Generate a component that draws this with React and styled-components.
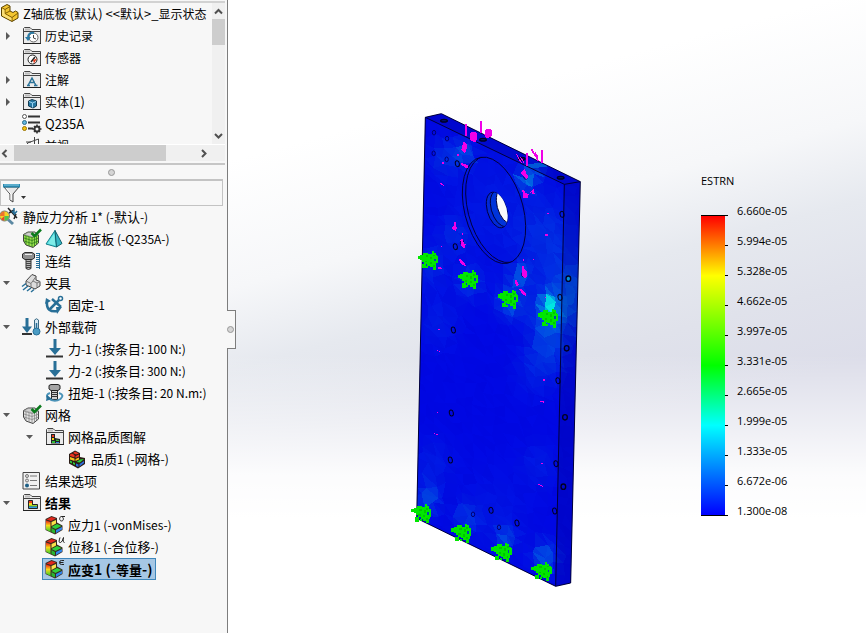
import React, { useState } from "react";
import styled, { createGlobalStyle } from "styled-components";

const Global = createGlobalStyle`
  * { box-sizing: border-box; }
  body { margin: 0; background: #fff; }
  button { font: inherit; color: inherit; background: none; border: 0; padding: 0; margin: 0; }
  ul { list-style: none; margin: 0; padding: 0; }
`;

const Layout = styled.div`
  display: flex;
  min-height: 100vh;
  color: #000;
  font-family: "Noto Sans CJK SC", "Open Sans", sans-serif;
  font-size: 13px;
`;

const Sidebar = styled.aside`
  flex: none;
  display: flex;
  flex-direction: column;
  width: 228px;
  background: #f7f7f7;
  border-right: 1px solid #7d7d7d;
`;

const FeaturePane = styled.section`
  display: grid;
  grid-template-columns: minmax(0, 1fr) 13px;
  grid-template-rows: 141px 17px;
  margin: 1px 2px 0 0;
  border-top: 2px solid #d2d2d2;
  font-size: 12px;
`;

const Clip = styled.div`
  overflow: hidden;
`;

const VScroll = styled.div`
  display: flex;
  flex-direction: column;
  background: #f0f0f0;
`;

const HScroll = styled.div`
  grid-column: 1 / -1;
  display: flex;
  align-items: stretch;
  background: #f0f0f0;
  border-top: 1px solid #fff;
`;

const ScrollButton = styled.button`
  flex: none;
  display: flex;
  align-items: center;
  justify-content: ${(p) => p.$align || "center"};
  width: ${(p) => p.$w}px;
  height: ${(p) => p.$h}px;
`;

const Track = styled.div`
  flex: 1;
  display: flex;
  flex-direction: ${(p) => (p.$vertical ? "column" : "row")};
`;

const Thumb = styled.div`
  flex: 0 0 ${(p) => p.$size};
  background: #cdcdcd;
`;

const Splitter = styled.div`
  display: flex;
  align-items: center;
  justify-content: center;
  height: 16px;
  margin: 2px 2px 0 0;
  padding-right: 3px;
  border-top: 2px solid #c6c6c6;
`;

const Grip = styled.span`
  display: block;
  width: 7px;
  height: 7px;
  border: 1px solid #979797;
  border-radius: 50%;
  background: #d5d5d5;
`;

const FilterBox = styled.label`
  display: flex;
  align-items: center;
  height: 27px;
  margin-right: 4px;
  padding-left: 2px;
  border: 1px solid #c3c3c3;
  border-top-width: 2px;
`;

const FilterInput = styled.input`
  flex: 1;
  min-width: 0;
  border: 0;
  outline: 0;
  background: transparent;
  font: inherit;
`;

const Row = styled.li`
  display: flex;
  align-items: center;
  height: 22px;
  padding-left: ${(p) => p.$level * 23}px;
  white-space: nowrap;
`;

const Toggle = styled.button`
  flex: none;
  display: flex;
  align-items: center;
  width: 22px;
  height: 22px;
  padding-left: 3px;
`;

const Item = styled.button`
  display: flex;
  align-items: center;
  gap: 3px;
  height: 22px;
  line-height: 20px;
  border: 1px solid transparent;
  border-width: 1px 3px 1px 0;
  text-align: left;
  font-weight: ${(p) => (p.$bold ? 700 : 400)};
  ${(p) =>
    p.$selected &&
    `
    margin-left: -3px;
    padding: 0 3px 0 2px;
    border: 1px solid #3f87bb;
    background: #a6c7e5;
  `}
`;

const Latin = styled.span`
  font-size: ${(p) => p.$size}px;
`;

const IconBox = styled.svg`
  flex: none;
  display: block;
  width: 20px;
  height: 20px;
  overflow: visible;
`;

const Glyph = styled.svg`
  flex: none;
  display: block;
`;

const Viewport = styled.main`
  position: relative;
  flex: 1;
  min-width: 0;
  display: grid;
  grid-template-columns: minmax(0, 177fr) 190px minmax(0, 106fr) 90px minmax(0, 75fr);
  background:
    linear-gradient(180deg, rgba(255, 255, 255, 0) 56%, rgba(255, 255, 255, 0.5) 67%, rgba(255, 255, 255, 0.9) 75%, #fff 82%),
    linear-gradient(165deg, #fff 20%, #f6f7f9 36%, #e6e9ef 46%, #e0e2eb 56%, #dcdde9 66%);
`;

const PaneHandle = styled.button`
  position: absolute;
  left: -1px;
  top: 49%;
  display: flex;
  align-items: center;
  width: 9px;
  height: 39px;
  border: 1px solid #7d7d7d;
  border-left: 0;
  background: #f7f7f7;
`;

const ModelSvg = styled.svg`
  grid-column: 2;
  display: block;
  width: 190px;
  height: 490px;
  margin-top: 105px;
`;

const Legend = styled.section`
  grid-column: 4;
  margin-top: 166px;
  font-family: "Open Sans", sans-serif;
  font-size: 11px;
`;

const LegendTitle = styled.div`
  height: 30px;
  line-height: 30px;
`;

const LegendBody = styled.div`
  display: flex;
  gap: 9px;
`;

const Scale = styled.div`
  display: flex;
  height: 301px;
  margin-top: 19px;
  border-top: 1px solid #000;
  border-bottom: 1px solid #000;
`;

const Ramp = styled.div`
  width: 24px;
  background: linear-gradient(180deg, #f00 0%, #ff0 20%, #0f0 50%, #0ff 70%, #00f 100%);
`;

const Ticks = styled.div`
  width: 3px;
  background: repeating-linear-gradient(180deg, transparent 0 29px, #000 29px 30px);
`;

const Labels = styled.ul`
  line-height: 30px;
`;

/* ---------- small glyphs ---------- */

const Chevron = ({ d }) => (
  <Glyph width="9" height="9" viewBox="0 0 9 9" aria-hidden="true">
    <path d={d} fill="none" stroke="#505050" strokeWidth="2" />
  </Glyph>
);

const Arrow = ({ open }) => (
  <Glyph width="8" height="8" viewBox="0 0 8 8" aria-hidden="true">
    <path d={open ? "M0 2H7L3.5 6Z" : "M3 0V8L7 4Z"} fill="#5a5a5a" />
  </Glyph>
);

/* ---------- tree icons, drawn on a 20 by 20 grid ---------- */

const Folder = ({ children }) => (
  <>
    <path d="M1.5 17.5V2.5L2.5 1.5H8L10 3.5H18.5V17.5Z" fill="#ebebeb" stroke="#444" />
    <path d="M2 5.500H18" stroke="#444" />
    <path d="M3 3.500H8" stroke="#bbb" strokeWidth="2" />
    <path d="M1 17.500H19" stroke="#222" />
    {children}
  </>
);

const MARKS = {
  sigma: "M20 1.5H16.5C14 1.5 14 6 16.5 6C19 6 19 2 16.5 1.5",
  u: "M15 .5Q13 6 15.500 5.500Q17.500 5 18.500 .5Q17.500 5.500 19.500 5.500",
  eps: "M19 1.500H16.500Q14.500 1.500 14.500 3.500Q14.500 5.500 16.500 5.500H19M15 3.500H18.500",
};

const Stress = ({ mark }) => (
  <>
    <defs>
      <linearGradient id="ramp" gradientUnits="userSpaceOnUse" x1="0" y1="3" x2="0" y2="18">
        <stop offset=".2" stopColor="#ee2b1a" />
        <stop offset=".5" stopColor="#f7d718" />
        <stop offset=".85" stopColor="#4cd02c" />
      </linearGradient>
    </defs>
    <path d="M.5 4L6.500 1L12 3V7.500L17.500 10.500V15L10 19.500L.5 15Z" fill="#3a2a20" />
    <path d="M1.500 4.500L6.500 2L11 3.500L6 6Z" fill="#e3261b" />
    <path d="M1 5.500L5.500 7V17L1 14.500Z" fill="url(#ramp)" />
    <path d="M6.500 7L11 5V8.500L6.500 11Z" fill="#f9e24a" />
    <path d="M6.500 12L12 9L16.500 11L10.500 14Z" fill="#2fd03a" />
    <path d="M6.500 13L10 15V18.500L6.500 17Z" fill="#29b52f" />
    <path d="M11 15L17 12V14.500L11 18Z" fill="#2f86ec" />
    <path d={MARKS[mark]} fill="none" stroke="#222" />
  </>
);

const MeshBlock = ({ green }) => (
  <>
    <path d="M1.5 5.500L6 3H13L16.500 6V14L11 18.500L4 16L1.500 12Z" fill={green ? "#9be24e" : "#e4e4e4"} stroke="#444" />
    <path
      d="M1.500 6L10 8.500L16.500 6M10 8.500V18M5 4L12 8M4 7V15.500M7 8V17M12.500 8V17M14.500 7V15M2 9L10 11.500L16.500 9M2 12L10 14.500L16.500 12"
      fill="none"
      stroke={green ? "#2f7b1c" : "#888"}
      strokeWidth="0.8"
    />
    <path d="M2 5.500L6 3.500H13L16 6L10 8Z" fill="#cfcfcf" stroke="#777" strokeWidth=".5" />
    <path d="M9.500 4L12.500 7L19 .5" fill="none" stroke="#0b7a1c" strokeWidth="2.500" />
  </>
);

const DownArrow = ({ x = 10 }) => (
  <>
    <path d={`M${x} 0V10`} stroke="#286f97" strokeWidth="3" />
    <path d={`M${x - 6} 9H${x + 6}L${x} 16Z`} fill="#286f97" />
  </>
);

const Bolt = () => (
  <>
    <path d="M.5 3L3 1.500H10L12.500 3V7L10 8.500H3L.5 7Z" fill="#8f8f8f" stroke="#2e2e2e" />
    <path d="M3 3.500H10" stroke="#eee" />
    <path d="M4 8.500H9V17.500L6.500 18.500L4 17.500Z" fill="#b7b7b7" stroke="#2e2e2e" />
    <path d="M4 10.500H9M4 12.500H9M4 14.500H9M4 16.500H9" stroke="#444" />
  </>
);

const ICONS = {
  part: (
    <>
      <path d="M1.500 3.500L7 .5L10 2V7L13 8.500L15.500 7L18 8.500V14L12 17.500L1.500 12Z" fill="#f3c531" stroke="#5b4300" />
      <path d="M1.500 3.500L5 5.500V9.500L12 13.500V17M12 13.500L18 9M5 5.500L10 2.500M5 9.500L10 7" fill="none" stroke="#7d5d04" />
      <path d="M2 4.500L4.500 6V10L11.500 14V16.500L2 11.500Z" fill="#f9de78" />
    </>
  ),
  history: (
    <Folder>
      <circle cx="11.500" cy="11.500" r="4.500" fill="#fff" stroke="#666" />
      <path d="M11.500 9V12L14 13" fill="none" stroke="#444" />
      <path d="M12 7Q6 6 6 12" fill="none" stroke="#2b7ba5" strokeWidth="2" />
      <path d="M3 11H9L6 15Z" fill="#2b7ba5" />
    </Folder>
  ),
  sensor: (
    <Folder>
      <circle cx="10.500" cy="11.500" r="4.500" fill="#fff" stroke="#222" />
      <path d="M9 14L13 9" stroke="#222" strokeWidth="1.500" />
      <path d="M11 12L15 10.500L12 15.500Z" fill="#e23b1a" />
    </Folder>
  ),
  note: (
    <Folder>
      <path d="M6 15.500L10 8L14 15.500M7.500 12.500H13M5 15.500H8M12 15.500H15.500" fill="none" stroke="#2b7298" strokeWidth="1.500" />
    </Folder>
  ),
  solid: (
    <Folder>
      <path d="M6.500 9L10 7.500L14.500 9V14L11 16L6.500 14Z" fill="#2678a3" stroke="#133c54" />
      <path d="M7 9.500L10.500 11V15.500M10.500 11L14 9.500" fill="none" stroke="#9cd3ef" />
    </Folder>
  ),
  material: (
    <>
      <path d="M6 2.500H18M6 8.500H18M6 14.500H11" stroke="#333" strokeWidth="2" />
      <circle cx="2.500" cy="2.500" r="2" fill="#fff" stroke="#555" />
      <circle cx="2.500" cy="8.500" r="2" fill="#62b6dd" stroke="#2b6c8c" />
      <circle cx="2.500" cy="14.500" r="2" fill="#f4c20d" stroke="#9a7400" />
      <circle cx="15" cy="15" r="2.500" fill="#f7f7f7" stroke="#333" strokeWidth="2" />
      <path d="M15 10.500V13M15 17V19.500M10.500 15H13M17 15H19.500M12 12L13 13M17 17L18 18M18 12L17 13M12 18L13 17" stroke="#333" strokeWidth="1.500" />
    </>
  ),
  plane: <path d="M5.500 17V7L16.500 3V15M4 6H9M12.500 1V16" fill="none" stroke="#444" />,
  study: (
    <>
      <circle cx="4.500" cy="9" r="5" fill="#f5d327" stroke="#777" />
      <path d="M0 9A4.500 4.500 0 0 1 4.500 4.500L4.500 9Z" fill="#f0722c" />
      <path d="M4.500 9L1 12A4.500 4.500 0 0 0 4.500 13.500Z" fill="#e8452c" />
      <path d="M4.500 13.500A4.500 4.500 0 0 0 9 9L4.500 9Z" fill="#4fc552" />
      <path d="M8 12.500L13 17" stroke="#5c89a3" strokeWidth="3" />
      <path d="M8 1L17 11M9 6L14 3M14 12L16 7" fill="none" stroke="#222" strokeWidth="1.500" />
      <path d="M14 1V6M12 4L14.500 7L17 4" fill="none" stroke="#286f97" strokeWidth="1.500" />
    </>
  ),
  meshPart: <MeshBlock green />,
  mesh: <MeshBlock />,
  tetra: (
    <>
      <path d="M1 15L10 1.500L11.500 18Z" fill="#53dfe2" stroke="#167f8a" />
      <path d="M10 1.500L17 14.500L11.500 18Z" fill="#35b6c4" stroke="#10606b" />
      <path d="M3 14.500L9 5L10.500 16.500Z" fill="#91f1ea" opacity=".7" />
    </>
  ),
  connect: (
    <>
      <Bolt />
      <path d="M14 2.500H18M14 4.500H18M14 6.500H18M14 8.500H18M14 10.500H18M14 12.500H18M14 14.500H18M14 16.500H18" stroke="#286f97" fill="none" />
      <path d="M17.500 2V18" stroke="#286f97" />
    </>
  ),
  fixture: (
    <>
      <path d="M4 8L10 1.500L14 3V7L18 8.500V13L13 16L4 12Z" fill="#dcdcdc" stroke="#444" />
      <path d="M4 8L9 10.500L14 3.500M9 10.500V14M11 8L15 10L18 8.500M15 10V14.500" fill="none" stroke="#777" />
      <path d="M0 13.500L4 10.500M1 17L6 13M5 18L9 15M9 19L12 16.500" stroke="#286f97" strokeWidth="1.500" />
    </>
  ),
  anchor: (
    <>
      <circle cx="15.500" cy="3.500" r="2" fill="#fff" stroke="#286f97" strokeWidth="1.500" />
      <path d="M14 5L4 15M7 4L16 12" fill="none" stroke="#286f97" strokeWidth="2.500" />
      <path d="M2 7Q1 18 13 16" fill="none" stroke="#286f97" strokeWidth="2.500" />
      <path d="M0 9L1 3L6 6ZM11 12H17L12 19Z" fill="#286f97" />
    </>
  ),
  loads: (
    <>
      <path d="M5 1V11" stroke="#286f97" strokeWidth="3" />
      <path d="M0 9.500H10L5 16Z" fill="#286f97" />
      <path d="M0 17H10" stroke="#333" strokeWidth="2" />
      <path d="M12.500 3Q14.500 .5 16.500 3V12H12.500Z" fill="#d6e8f2" stroke="#3a6a84" />
      <path d="M14.500 6V14" stroke="#286f97" strokeWidth="1.500" />
      <circle cx="14.500" cy="14.500" r="3.500" fill="#4b9cc4" stroke="#286f97" />
    </>
  ),
  force: (
    <>
      <DownArrow />
      <path d="M1 17.500H18" stroke="#333" strokeWidth="2" />
    </>
  ),
  torque: (
    <>
      <path d="M4 2.500L6 1.500H13L15 2.500V6L13 7.500H6L4 6Z" fill="#a5a5a5" stroke="#222" />
      <path d="M6.500 7.500H12.500V16.500H6.500Z" fill="#d0d0d0" stroke="#222" />
      <path d="M6 9.500H13M6 11.500H13M6 13.500H13" stroke="#333" />
      <path d="M5 10Q0 12 3 15Q9 20 15.500 16Q20 12 14 10" fill="none" stroke="#4b93b8" strokeWidth="2" />
      <path d="M1 18L2 12L7 16Z" fill="#286f97" />
    </>
  ),
  meshFolder: (
    <Folder>
      <path d="M6 7H10V11L15 12V16.500H6Z" fill="#222" />
      <path d="M7 8H9V10H7Z" fill="#f03b1e" />
      <path d="M7 11H9V13H7Z" fill="#f6d21b" />
      <path d="M7 14H10V16H7ZM11 12.500L14 13V14H11Z" fill="#30bb37" />
      <path d="M11 15H14V16H11Z" fill="#2b86e0" />
    </Folder>
  ),
  quality: (
    <>
      <path d="M1 5L7 1.500L12 4V8L17 9V15L10 19.500L1 14.500Z" fill="#2a1c16" />
      <path d="M2 5.500L4 4.500L6.500 6V8.500L2 7ZM5 4L7 2.500L11 4.500L8 5.500ZM7.500 7L11 5.500V7.500L7.500 9Z" fill="#ee3420" />
      <path d="M2 8L6.500 9.500V12L2 10.500ZM7.500 10L11 8.500V10.500L7.500 12Z" fill="#f7c320" />
      <path d="M2 11.500L4 12.500V14.500L2 13.500ZM8.500 13L12 10.500L16 10L12 13.500ZM5 13L7 14V16L5 15Z" fill="#2fd03a" />
      <path d="M8 14.500L10.500 15.500V18L8 17ZM11.500 15L16 12V14L11.500 17.500Z" fill="#2d6fe0" />
    </>
  ),
  options: (
    <>
      <path d="M1 1.500H17.500V18H1Z" fill="#f1f1f1" stroke="#444" />
      <path d="M8 5H15M8 9.500H15M8 14.500H15" stroke="#777" />
      <circle cx="5" cy="5" r="1.500" fill="#ddd" stroke="#777" />
      <circle cx="5" cy="9.500" r="1.500" fill="#ddd" stroke="#777" />
      <circle cx="5" cy="14.500" r="2" fill="#1d5f86" />
    </>
  ),
  results: (
    <Folder>
      <path d="M6.500 7.500H10.500V11.500H15.500V15.500H6.500Z" fill="#222" stroke="#222" />
      <path d="M7 8H10V10H7Z" fill="#f03b1e" />
      <path d="M7 10H10V12H7Z" fill="#f6d21b" />
      <path d="M7 12H15V13.500H7Z" fill="#9bd327" />
      <path d="M7 13.500H15V15H7Z" fill="#2a9fe0" />
    </Folder>
  ),
  stress: <Stress mark="sigma" />,
  disp: <Stress mark="u" />,
  strain: <Stress mark="eps" />,
};

const Icon = ({ name }) => (
  <IconBox viewBox="0 0 20 20" aria-hidden="true">
    {ICONS[name]}
  </IconBox>
);

/* ---------- trees ---------- */

const FEATURES = [
  { root: true, icons: ["part"], text: "Z轴底板 (默认) <<默认>_显示状态" },
  { icons: ["history"], text: "历史记录", arrow: "closed" },
  { icons: ["sensor"], text: "传感器" },
  { icons: ["note"], text: "注解", arrow: "closed" },
  { icons: ["solid"], text: "实体(1)", arrow: "closed" },
  { icons: ["material"], text: "Q235A" },
  { icons: ["plane"], text: "前视" },
];

const STUDY = [
  { root: true, icons: ["study"], text: "静应力分析 1* (-默认-)" },
  { icons: ["meshPart", "tetra"], text: "Z轴底板 (-Q235A-)" },
  { icons: ["connect"], text: "连结" },
  { icons: ["fixture"], text: "夹具", arrow: "open" },
  { level: 1, icons: ["anchor"], text: "固定-1" },
  { icons: ["loads"], text: "外部载荷", arrow: "open" },
  { level: 1, icons: ["force"], text: "力-1 (:按条目: 100 N:)" },
  { level: 1, icons: ["force"], text: "力-2 (:按条目: 300 N:)" },
  { level: 1, icons: ["torque"], text: "扭矩-1 (:按条目: 20 N.m:)" },
  { icons: ["mesh"], text: "网格", arrow: "open" },
  { level: 1, icons: ["meshFolder"], text: "网格品质图解", arrow: "open" },
  { level: 2, icons: ["quality"], text: "品质1 (-网格-)" },
  { icons: ["options"], text: "结果选项" },
  { icons: ["results"], text: "结果", arrow: "open", bold: true },
  { level: 1, icons: ["stress"], text: "应力1 (-vonMises-)" },
  { level: 1, icons: ["disp"], text: "位移1 (-合位移-)" },
  { level: 1, icons: ["strain"], text: "应变1 (-等量-)", bold: true },
];

const Spacer = styled.span`
  flex: none;
  width: 22px;
`;

/* Latin runs are set at their own size beside the Chinese text. */
const Caption = ({ text, latin }) => (
  <span>
    {text.split(/([\x20-\x7e]+)/).map((run, i) =>
      i % 2 ? (
        <Latin key={i} $size={latin}>
          {run}
        </Latin>
      ) : (
        run
      )
    )}
  </span>
);

const Tree = ({ items, label, latin, selected, onSelect }) => (
  <ul aria-label={label}>
    {items.map((it) => (
      <Row key={it.text} $level={it.level || 0}>
        {it.root ? null : it.arrow ? (
          <Toggle aria-label={it.text} aria-expanded={it.arrow === "open"}>
            <Arrow open={it.arrow === "open"} />
          </Toggle>
        ) : (
          <Spacer />
        )}
        <Item $bold={it.bold} $selected={selected === it.text} onClick={() => onSelect && onSelect(it.text)}>
          {it.icons.map((n) => (
            <Icon key={n} name={n} />
          ))}
          <Caption text={it.text} latin={it.bold ? 14 : latin} />
        </Item>
      </Row>
    ))}
  </ul>
);

/* ---------- strain plot ---------- */

const HOT = [
  [435, 600, 24, 0.7], [435, 640, 55, 0.28], [505, 560, 75, 0.28], [320, 590, 40, 0.26], [345, 510, 28, 0.26],
  [195, 535, 36, 0.15], [365, 225, 24, 0.4], [178, 145, 28, 0.25], [118, 158, 40, 0.14], [75, 480, 50, 0.12],
  [100, 650, 60, 0.07], [430, 400, 90, 0.13], [68, 1180, 32, 0.26], [186, 1235, 34, 0.16], [303, 1300, 28, 0.22],
  [420, 1355, 34, 0.3], [432, 740, 55, 0.15], [395, 190, 20, 0.25], [390, 800, 60, 0.07], [270, 1220, 90, 0.05],
  [80, 1080, 60, 0.07], [150, 390, 40, 0.1], [400, 1080, 50, 0.07], [270, 300, 150, 0.06],
];

const noise = (i, j) => {
  const v = Math.sin(i * 127.1 + j * 311.7) * 43758.5453;
  return v - Math.floor(v);
};

const strainColor = (x, y, n) => {
  let t = 0.03;
  for (const [hx, hy, r, a] of HOT) {
    const d = ((x - hx) ** 2 + ((y - hy) * 0.8) ** 2) / (r * r);
    t += a * Math.exp(-d);
  }
  t = Math.max(0, Math.min(1, t * (0.86 + n * 0.28)));
  return `rgb(0,${Math.round(t * 240)},${Math.round(224 + n * 5)})`;
};

const STEP = 30;

const buildMesh = () => {
  const pt = (i, j) => [
    Math.round(i * STEP + (noise(i, j) - 0.5) * 20),
    Math.round(j * STEP + (noise(j + 40, i) - 0.5) * 20),
  ];
  const out = [];
  for (let j = 0; j < 50; j++) {
    for (let i = 0; i < 19; i++) {
      const q = [pt(i, j), pt(i + 1, j), pt(i + 1, j + 1), pt(i, j + 1)];
      [[q[0], q[1], q[2]], [q[0], q[2], q[3]]].forEach((t, k) => {
        const cx = (t[0][0] + t[1][0] + t[2][0]) / 3;
        const cy = (t[0][1] + t[1][1] + t[2][1]) / 3;
        out.push({ points: t.join(" "), fill: strainColor(cx, cy, noise(i + k * 7, j + 3)) });
      });
    }
  }
  return out;
};

const MESH = buildMesh();

const FIXTURES = [[72, 467], [192, 525], [312, 583], [432, 640], [52, 1227], [172, 1285], [293, 1342], [413, 1400]];

const HOLES = [
  [157, 176], [151, 425], [145, 675], [139, 924], [136, 1065], [258, 1216], [336, 1254],
  [471, 328], [465, 577], [459, 827], [453, 1076], [449, 1218],
];
const SIDE_HOLES = [[490, 521], [485, 730], [480, 937], [475, 1145]];
const SMALL_HOLES = [[87, 83], [126, 101], [86, 145], [125, 163], [204, 1228], [282, 1267], [178, 128], [171, 412], [362, 216], [355, 508]];
const TOP_HOLES = [[117, 47], [234, 104], [350, 161], [467, 218]];

const LOADS = [
  "M181 57h5v36h-5zM226 47h5v36h-5zM364 145h5v38h-5zM409 135h5v38h-5z",
  "M195 84l8-4 12 3v22l-4 6h-6l-10-8zM241 74l8-4 11 4v20l-8 4h-10l-4-8z",
  "M173 112h7l6 8-2 18-6 8-4-8-6-2 4-10zM168 172l8 4 12 4 2 10h-8l-4-6-10-4z",
  "M376 132l6 0 20 34-4 2zM386 133l14 22-3 6zM332 142l12 20 10 14-6-2-10-16zM342 150l16 20-3 4z",
  "M346 204l14-12 4 14 6 6-4 10-14-12zM352 256h6l4 8 9 4-2 10h-14zM378 260l8-8 3 16h-6z",
  "M148 352l6 0 0 14 4 0-6 12-8-4-4-4 6-8zM166 404l8-4 2 14 6 4-4 12-8-6zM160 462l10 2 12 16v4l-12-6z",
  "M351 483h6l2 10 6 4 2 16-8 8-8-10zM330 526l6 0 6 14-6 4-6-10zM342 552l10 2 12 12 0 8-12-6z",
  "M104 234l6 1 8 6-2 2-10-5zM156 148h5v4h-5zM111 171h5v5h-5zM100 486l10 2v3h-10zM98 671h6v4h-6zM94 736l11 1v4z",
  "M413 822h6v5h-6zM405 887h6l6 3v4l-12-4zM407 1073h6v4h-6zM399 1136l14 6v3l-12-5zM87 985l12 3v3l-11-4zM426 323h5v4h-5zM420 388h9v4h-9z",
  "M353 462h5v5h-5zM384 461h4v4h-4zM106 419l6 6h-4zM171 383h4v7h-4zM419 575h5v4h-5zM96 921h4v4h-4zM372 264l6-3v5z",
];

const Clamp = ({ x, y }) => (
  <g transform={`translate(${x} ${y})`}>
    <path
      d="M-34-15H-26V-18H-17V-24H-2V-20H8V-29H14V-24H20V-14H27V8H22V16H20V28H11V20H2V15H-5V10H-10V23H-22V10H-14V4H-20V-2H-26V-5H-34Z"
      fill="#00e600"
    />
    <path d="M-10-16h8v6h-8zM4-12h6v8h-6zM12-18h6v5h-6zM-12 0h7v5h-7zM2 3h6v7h-6zM12 12h5v6h-5z" fill="#00c400" />
    <path d="M15-6h5v8h-5z" fill="#0044b0" />
    <path d="M20-16h5v5h-5zM-8 16h6v6h-6z" fill="#00e600" />
  </g>
);

const EDGE = "#00003c";

const Model = () => (
  <ModelSvg viewBox="0 0 570 1470" role="img" aria-label="ESTRN">
    <defs>
      <clipPath id="body">
        <path d="M61 37L109 26L526 230L497 1434L452 1444L35 1240Z" />
      </clipPath>
      <clipPath id="rim">
        <circle r="1" transform="matrix(95 46 4 153 267 316)" />
      </clipPath>
      <clipPath id="bore">
        <circle r="1" transform="matrix(32 16 2 51 276 315)" />
      </clipPath>
    </defs>
    <g clipPath="url(#body)" shapeRendering="crispEdges">
      <path d="M61 37L109 26L526 230L497 1434L452 1444L35 1240Z" fill="#0008de" />
      {MESH.map((m, i) => (
        <polygon key={i} points={m.points} fill={m.fill} />
      ))}
      <path d="M478 238L526 230L497 1434L452 1444Z" fill="#00007a" opacity=".22" />
      <path d="M61 37L109 26L526 230L478 238Z" fill="#0000a0" opacity=".3" />
      <path d="M360 180L410 172L430 184L380 190Z" fill="#0058d8" />
    </g>
    <g fill="none" stroke={EDGE} strokeWidth="3">
      <path d="M61 37L109 26L526 230L497 1434L452 1444L35 1240ZM61 37L478 238L452 1444M478 238L526 230" />
      <circle r="1" transform="matrix(95 46 4 153 267 316)" vectorEffect="non-scaling-stroke" strokeWidth="1" />
      <g clipPath="url(#rim)">
        <circle r="1" transform="matrix(95 46 4 153 277 313)" vectorEffect="non-scaling-stroke" strokeWidth="1" />
      </g>
    </g>
    <circle r="1" transform="matrix(32 16 2 51 276 315)" fill="#0028d8" stroke={EDGE} strokeWidth="1" vectorEffect="non-scaling-stroke" />
    <g clipPath="url(#bore)" stroke={EDGE} strokeWidth="1">
      <circle r="1" transform="matrix(32 16 2 51 288 311)" fill="#0034da" vectorEffect="non-scaling-stroke" />
      <circle r="1" transform="matrix(32 16 2 51 306 303)" fill="#fafbfc" vectorEffect="non-scaling-stroke" />
    </g>
    <g fill="none" stroke="#000022" strokeWidth="3">
      {HOLES.map(([x, y]) => (
        <ellipse key={`${x}-${y}`} cx={x} cy={y} rx="6" ry="9" transform={`rotate(-12 ${x} ${y})`} />
      ))}
      {SIDE_HOLES.map(([x, y]) => (
        <ellipse key={y} cx={x} cy={y} rx="7" ry="8" strokeWidth="4" fill={y === 521 ? "#0090dc" : "none"} />
      ))}
      {TOP_HOLES.map(([x, y]) => (
        <ellipse key={x} cx={x} cy={y} rx="10" ry="4" strokeWidth="4" fill="#00106c" />
      ))}
    </g>
    <g fill="none" stroke="#000070" strokeWidth="3">
      {SMALL_HOLES.map(([x, y]) => (
        <ellipse key={`${x}-${y}`} cx={x} cy={y} rx="5" ry="7" />
      ))}
    </g>
    <g shapeRendering="crispEdges">
      {LOADS.map((d) => (
        <path key={d} d={d} fill="#f000e8" />
      ))}
      {FIXTURES.map(([x, y]) => (
        <Clamp key={`${x}-${y}`} x={x} y={y} />
      ))}
    </g>
  </ModelSvg>
);

const VALUES = [
  "6.660e-05", "5.994e-05", "5.328e-05", "4.662e-05", "3.997e-05", "3.331e-05",
  "2.665e-05", "1.999e-05", "1.333e-05", "6.672e-06", "1.300e-08",
];

export default function App() {
  const [selected, setSelected] = useState("应变1 (-等量-)");
  return (
    <Layout>
      <Global />
      <Sidebar>
        <FeaturePane>
          <Clip>
            <Tree items={FEATURES} label="Z轴底板" latin={13} />
          </Clip>
          <VScroll>
            <ScrollButton $w={13} $h={16} aria-label="向上">
              <Chevron d="M1 6.500L4.500 3L8 6.500" />
            </ScrollButton>
            <Track $vertical>
              <Thumb $size="26px" />
            </Track>
            <ScrollButton $w={13} $h={17} aria-label="向下">
              <Chevron d="M1 3L4.500 6.500L8 3" />
            </ScrollButton>
          </VScroll>
          <HScroll>
            <ScrollButton $w={14} $h={16} $align="flex-start" aria-label="向左">
              <Chevron d="M6.500 1L3 4.500L6.500 8" />
            </ScrollButton>
            <Track>
              <Thumb $size="90%" />
            </Track>
            <ScrollButton $w={42} $h={16} aria-label="向右">
              <Chevron d="M2 1L5.500 4.500L2 8" />
            </ScrollButton>
          </HScroll>
        </FeaturePane>
        <Splitter>
          <Grip />
        </Splitter>
        <FilterBox>
          <Glyph width="26" height="22" viewBox="0 0 26 22" aria-hidden="true">
            <path d="M1 5L7 12V18L10 20V12L16 5Z" fill="#e8e8e8" stroke="#444" />
            <path d="M3 6L8 12V18" fill="none" stroke="#fff" />
            <path d="M0 2H17V5.500H0Z" fill="#2887ad" />
            <path d="M1 3H16" stroke="#8ed2ea" />
            <path d="M18 14H23L20.500 17Z" fill="#333" />
          </Glyph>
          <FilterInput aria-label="过滤器" />
        </FilterBox>
        <Tree items={STUDY} label="静应力分析" latin={12} selected={selected} onSelect={setSelected} />
      </Sidebar>
      <Viewport>
        <PaneHandle aria-label="面板">
          <Grip />
        </PaneHandle>
        <Model />
        <Legend>
          <LegendTitle>ESTRN</LegendTitle>
          <LegendBody>
            <Scale>
              <Ramp />
              <Ticks />
            </Scale>
            <Labels>
              {VALUES.map((v) => (
                <li key={v}>{v}</li>
              ))}
            </Labels>
          </LegendBody>
        </Legend>
      </Viewport>
    </Layout>
  );
}
